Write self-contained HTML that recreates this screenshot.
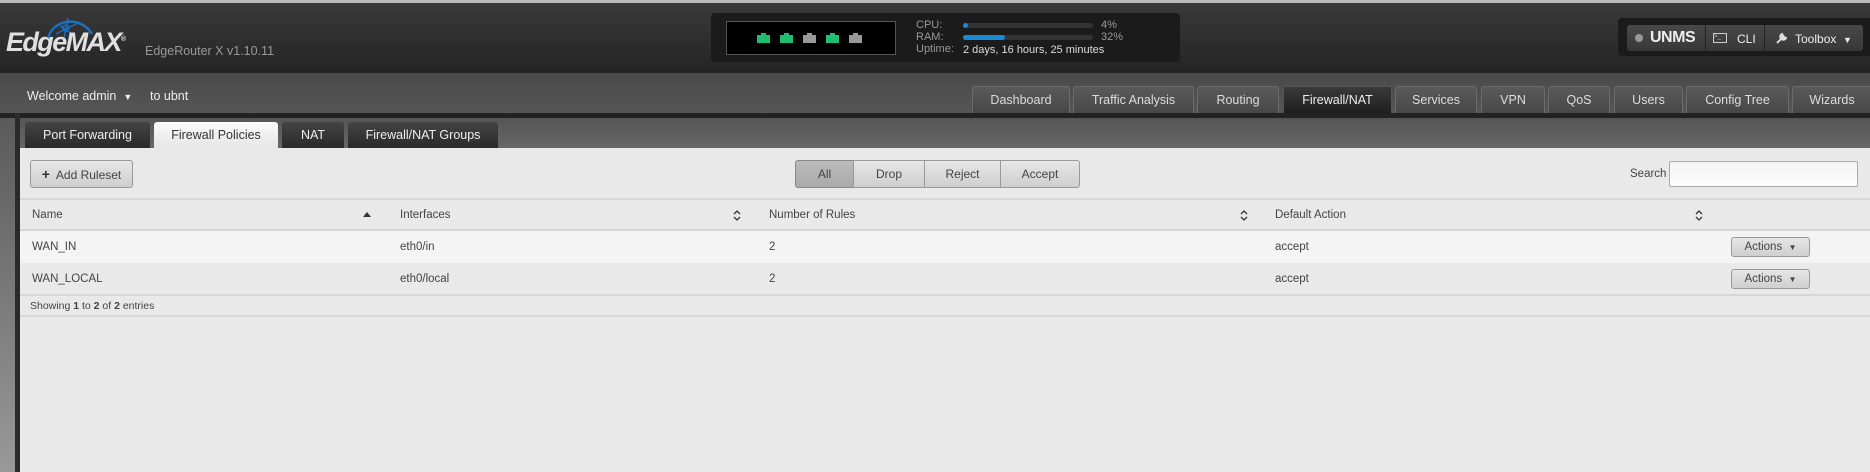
<!DOCTYPE html>
<html><head><meta charset="utf-8"><style>
*{margin:0;padding:0;box-sizing:border-box}
body{width:1870px;height:472px;overflow:hidden;position:relative;font-family:"Liberation Sans",sans-serif;background:#555}
.a{position:absolute}
.hdr{left:0;top:0;width:1870px;height:73px;background:linear-gradient(#3a3a3a,#242424);border-top:3px solid #bbb}
.sub{left:0;top:73px;width:1870px;height:45px;background:linear-gradient(#4a4a4a,#575757)}
.nav{top:86px;height:27px;border:1px solid #6a6a6a;border-bottom:none;border-radius:3px 3px 0 0;background:linear-gradient(#5a5a5a,#474747);color:#ddd;font-size:12.5px;text-align:center;line-height:26px}
.nav.on{background:linear-gradient(#3a3a3a,#1e1e1e);color:#eee;border-color:#555}
.stab{top:122px;height:26px;border-radius:3px 3px 0 0;background:linear-gradient(#444,#2a2a2a);color:#eee;font-size:12.5px;text-align:center;line-height:27px}
.stab.on{background:linear-gradient(#fafafa,#e6e6e6);color:#333}
.btn{border:1px solid #999;border-radius:3px;background:linear-gradient(#e6e6e6,#cfcfcf);color:#444;font-size:12px;text-align:center}
.t{font-size:11.5px;color:#444}
</style></head><body>
<div class="a hdr"></div>
<div class="a sub"></div>
<!-- logo -->
<svg class="a" style="left:40px;top:12px" width="60" height="30"><path d="M8 28 C10 8 40 2 52 22" fill="none" stroke="#1c6fb8" stroke-width="2.5"/><path d="M20 14 L32 22 M28 6 L24 26 M16 22 L40 10" stroke="#1c6fb8" stroke-width="1.5" fill="none"/><circle cx="26" cy="16" r="3" fill="none" stroke="#1c6fb8" stroke-width="1.5"/></svg>
<div class="a" style="left:6px;top:27px;font-size:27px;font-weight:bold;font-style:italic;color:#e0e0e0;letter-spacing:-1.6px">EdgeMAX<sup style="font-size:7px;font-style:normal;letter-spacing:0">®</sup></div>
<div class="a" style="left:145px;top:44px;font-size:12.5px;color:#999">EdgeRouter X v1.10.11</div>
<!-- status -->
<div class="a" style="left:711px;top:13px;width:469px;height:49px;background:#1b1b1b;border-radius:4px"></div>
<div class="a" style="left:726px;top:21px;width:170px;height:34px;background:#000;border:1px solid #555"></div>
<div class="a" style="left:757px;top:35px;width:13px;height:8px;background:#1fbf73"></div>
<div class="a" style="left:780px;top:35px;width:13px;height:8px;background:#1fbf73"></div>
<div class="a" style="left:803px;top:35px;width:13px;height:8px;background:#999"></div>
<div class="a" style="left:826px;top:35px;width:13px;height:8px;background:#1fbf73"></div>
<div class="a" style="left:849px;top:35px;width:13px;height:8px;background:#999"></div>
<div class="a" style="left:761px;top:33px;width:5px;height:2px;background:#1fbf73"></div>
<div class="a" style="left:784px;top:33px;width:5px;height:2px;background:#1fbf73"></div>
<div class="a" style="left:807px;top:33px;width:5px;height:2px;background:#999"></div>
<div class="a" style="left:830px;top:33px;width:5px;height:2px;background:#1fbf73"></div>
<div class="a" style="left:853px;top:33px;width:5px;height:2px;background:#999"></div>
<div class="a" style="left:916px;top:19px;font-size:11px;color:#999;line-height:12px">CPU:<br>RAM:<br>Uptime:</div>
<div class="a" style="left:963px;top:23px;width:130px;height:5px;background:#333;border-radius:3px"><div style="width:5px;height:5px;background:#1a8ad4;border-radius:3px"></div></div>
<div class="a" style="left:963px;top:35px;width:130px;height:5px;background:#333;border-radius:3px"><div style="width:42px;height:5px;background:#1a8ad4;border-radius:3px"></div></div>
<div class="a" style="left:1101px;top:19px;font-size:11px;color:#999;line-height:12px">4%<br>32%</div>
<div class="a" style="left:963px;top:44px;font-size:11px;color:#ddd">2 days, 16 hours, 25 minutes</div>
<!-- right buttons -->
<div class="a" style="left:1618px;top:18px;width:260px;height:38px;background:#1b1b1b;border-radius:4px"></div>
<div class="a" style="left:1627px;top:25px;width:236px;height:26px;background:linear-gradient(#484848,#383838);border-radius:3px"></div>
<div class="a" style="left:1705px;top:25px;width:1px;height:26px;background:#222"></div>
<div class="a" style="left:1764px;top:25px;width:1px;height:26px;background:#222"></div>
<div class="a" style="left:1635px;top:34px;width:8px;height:8px;border-radius:50%;background:#999"></div>
<div class="a" style="left:1650px;top:29px;font-size:16px;font-weight:bold;color:#eee;letter-spacing:-0.5px">UNMS</div>
<div class="a" style="left:1713px;top:33px;width:14px;height:10px;border:1px solid #ccc;font-size:6px;color:#ccc;line-height:6px">&gt;_</div>
<div class="a" style="left:1737px;top:32px;font-size:12px;color:#eee">CLI</div>
<svg class="a" style="left:1776px;top:32px" width="12" height="12"><path d="M1 11 L7 5 M6 2 a3 3 0 1 0 4 4 L8 5 Z" stroke="#ddd" stroke-width="2" fill="#ddd"/></svg>
<div class="a" style="left:1795px;top:32px;font-size:12px;color:#eee">Toolbox &nbsp;<span style="font-size:9px">▼</span></div>
<!-- welcome -->
<div class="a" style="left:27px;top:89px;font-size:12.5px;color:#eee">Welcome admin &nbsp;<span style="font-size:9px">▼</span></div>
<div class="a" style="left:150px;top:89px;font-size:12.5px;color:#eee">to ubnt</div>
<!-- nav -->
<div class="a nav" style="left:972px;width:98px">Dashboard</div>
<div class="a nav" style="left:1073px;width:121px">Traffic Analysis</div>
<div class="a nav" style="left:1197px;width:82px">Routing</div>
<div class="a nav on" style="left:1283px;width:109px">Firewall/NAT</div>
<div class="a nav" style="left:1395px;width:82px">Services</div>
<div class="a nav" style="left:1481px;width:64px">VPN</div>
<div class="a nav" style="left:1548px;width:62px">QoS</div>
<div class="a nav" style="left:1614px;width:69px">Users</div>
<div class="a nav" style="left:1686px;width:103px">Config Tree</div>
<div class="a nav" style="left:1792px;width:80px">Wizards</div>
<!-- panel -->
<div class="a" style="left:0;top:113px;width:1870px;height:5px;background:#222"></div>
<div class="a" style="left:0;top:118px;width:15px;height:354px;background:linear-gradient(#5a5a5a,#999)"></div>
<div class="a" style="left:15px;top:113px;width:5px;height:359px;background:#2a2a2a"></div>
<div class="a" style="left:20px;top:118px;width:1850px;height:30px;background:linear-gradient(#555,#676767)"></div>
<div class="a stab" style="left:25px;width:125px">Port Forwarding</div>
<div class="a stab on" style="left:154px;width:124px">Firewall Policies</div>
<div class="a stab" style="left:282px;width:62px">NAT</div>
<div class="a stab" style="left:348px;width:150px">Firewall/NAT Groups</div>
<div class="a" style="left:20px;top:148px;width:1850px;height:324px;background:#e9e9e9"></div>
<div class="a btn" style="left:30px;top:160px;width:103px;height:28px;line-height:26px"><b style="font-size:14px;color:#333">+</b>&nbsp; Add Ruleset</div>
<div class="a btn" style="left:795px;top:160px;width:59px;height:28px;line-height:26px;background:linear-gradient(#bbb,#aaa);border-color:#888;border-radius:3px 0 0 3px">All</div>
<div class="a btn" style="left:853px;top:160px;width:72px;height:28px;line-height:26px;border-radius:0">Drop</div>
<div class="a btn" style="left:924px;top:160px;width:77px;height:28px;line-height:26px;border-radius:0">Reject</div>
<div class="a btn" style="left:1000px;top:160px;width:80px;height:28px;line-height:26px;border-radius:0 3px 3px 0">Accept</div>
<div class="a t" style="left:1630px;top:168px">Search</div>
<div class="a" style="left:1669px;top:161px;width:189px;height:26px;background:linear-gradient(#f3f3f3,#fcfcfc);border:1px solid #aaa;border-radius:2px"></div>
<div class="a" style="left:20px;top:198px;width:1850px;height:2px;background:#d6d6d6"></div>
<div class="a t" style="left:32px;top:209px">Name</div>
<svg class="a" style="left:363px;top:212px" width="8" height="6"><path d="M0 5 L4 0 L8 5Z" fill="#333"/></svg>
<div class="a t" style="left:400px;top:209px">Interfaces</div>
<svg class="a" style="left:733px;top:210px" width="8" height="11"><path d="M1 4 L4 1 L7 4 M1 7 L4 10 L7 7" stroke="#333" stroke-width="1.3" fill="none"/></svg>
<div class="a t" style="left:769px;top:209px">Number of Rules</div>
<svg class="a" style="left:1240px;top:210px" width="8" height="11"><path d="M1 4 L4 1 L7 4 M1 7 L4 10 L7 7" stroke="#333" stroke-width="1.3" fill="none"/></svg>
<div class="a t" style="left:1275px;top:209px">Default Action</div>
<svg class="a" style="left:1695px;top:210px" width="8" height="11"><path d="M1 4 L4 1 L7 4 M1 7 L4 10 L7 7" stroke="#333" stroke-width="1.3" fill="none"/></svg>
<div class="a" style="left:20px;top:229px;width:1850px;height:2px;background:#d6d6d6"></div>
<div class="a" style="left:20px;top:231px;width:1850px;height:32px;background:#f4f4f4"></div>
<div class="a t" style="left:32px;top:241px">WAN_IN</div>
<div class="a t" style="left:400px;top:241px">eth0/in</div>
<div class="a t" style="left:769px;top:241px">2</div>
<div class="a t" style="left:1275px;top:241px">accept</div>
<div class="a btn" style="left:1731px;top:237px;width:79px;height:20px;line-height:18px;font-size:11.5px">Actions &nbsp;<span style="font-size:8px">▼</span></div>
<div class="a t" style="left:32px;top:273px">WAN_LOCAL</div>
<div class="a t" style="left:400px;top:273px">eth0/local</div>
<div class="a t" style="left:769px;top:273px">2</div>
<div class="a t" style="left:1275px;top:273px">accept</div>
<div class="a btn" style="left:1731px;top:269px;width:79px;height:20px;line-height:18px;font-size:11.5px">Actions &nbsp;<span style="font-size:8px">▼</span></div>
<div class="a" style="left:20px;top:294px;width:1850px;height:2px;background:#d6d6d6"></div>
<div class="a" style="left:30px;top:300px;font-size:10.5px;color:#444">Showing <b>1</b> to <b>2</b> of <b>2</b> entries</div>
<div class="a" style="left:20px;top:315px;width:1850px;height:2px;background:#d6d6d6"></div>
</body></html>
